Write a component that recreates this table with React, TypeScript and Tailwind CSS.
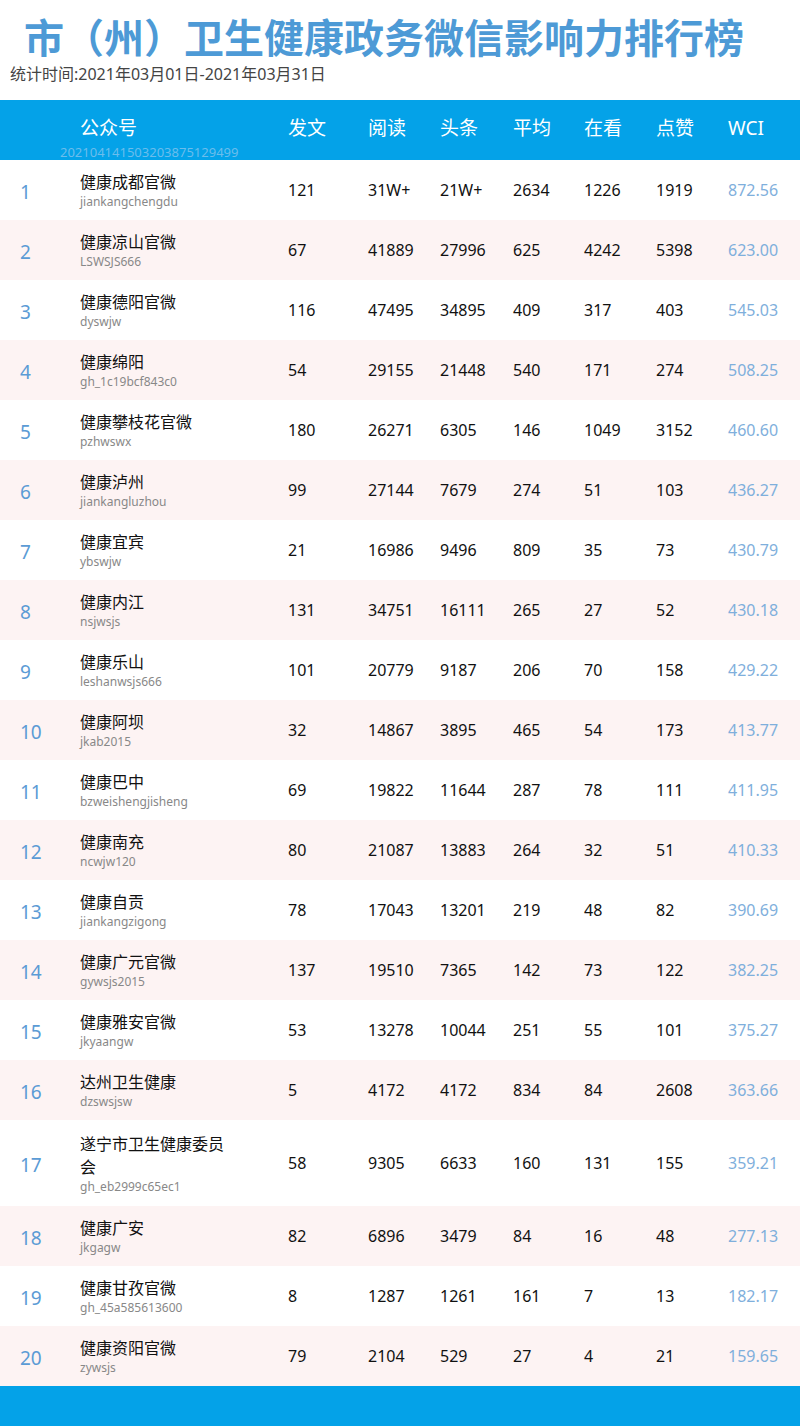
import React from 'react';

interface Row {
  name: string;
  id: string;
  posts: string;
  reads: string;
  top: string;
  avg: string;
  watch: string;
  likes: string;
  wci: string;
}

const rows: Row[] = [
  { name: '健康成都官微', id: 'jiankangchengdu', posts: '121', reads: '31W+', top: '21W+', avg: '2634', watch: '1226', likes: '1919', wci: '872.56' },
  { name: '健康凉山官微', id: 'LSWSJS666', posts: '67', reads: '41889', top: '27996', avg: '625', watch: '4242', likes: '5398', wci: '623.00' },
  { name: '健康德阳官微', id: 'dyswjw', posts: '116', reads: '47495', top: '34895', avg: '409', watch: '317', likes: '403', wci: '545.03' },
  { name: '健康绵阳', id: 'gh_1c19bcf843c0', posts: '54', reads: '29155', top: '21448', avg: '540', watch: '171', likes: '274', wci: '508.25' },
  { name: '健康攀枝花官微', id: 'pzhwswx', posts: '180', reads: '26271', top: '6305', avg: '146', watch: '1049', likes: '3152', wci: '460.60' },
  { name: '健康泸州', id: 'jiankangluzhou', posts: '99', reads: '27144', top: '7679', avg: '274', watch: '51', likes: '103', wci: '436.27' },
  { name: '健康宜宾', id: 'ybswjw', posts: '21', reads: '16986', top: '9496', avg: '809', watch: '35', likes: '73', wci: '430.79' },
  { name: '健康内江', id: 'nsjwsjs', posts: '131', reads: '34751', top: '16111', avg: '265', watch: '27', likes: '52', wci: '430.18' },
  { name: '健康乐山', id: 'leshanwsjs666', posts: '101', reads: '20779', top: '9187', avg: '206', watch: '70', likes: '158', wci: '429.22' },
  { name: '健康阿坝', id: 'jkab2015', posts: '32', reads: '14867', top: '3895', avg: '465', watch: '54', likes: '173', wci: '413.77' },
  { name: '健康巴中', id: 'bzweishengjisheng', posts: '69', reads: '19822', top: '11644', avg: '287', watch: '78', likes: '111', wci: '411.95' },
  { name: '健康南充', id: 'ncwjw120', posts: '80', reads: '21087', top: '13883', avg: '264', watch: '32', likes: '51', wci: '410.33' },
  { name: '健康自贡', id: 'jiankangzigong', posts: '78', reads: '17043', top: '13201', avg: '219', watch: '48', likes: '82', wci: '390.69' },
  { name: '健康广元官微', id: 'gywsjs2015', posts: '137', reads: '19510', top: '7365', avg: '142', watch: '73', likes: '122', wci: '382.25' },
  { name: '健康雅安官微', id: 'jkyaangw', posts: '53', reads: '13278', top: '10044', avg: '251', watch: '55', likes: '101', wci: '375.27' },
  { name: '达州卫生健康', id: 'dzswsjsw', posts: '5', reads: '4172', top: '4172', avg: '834', watch: '84', likes: '2608', wci: '363.66' },
  { name: '遂宁市卫生健康委员会', id: 'gh_eb2999c65ec1', posts: '58', reads: '9305', top: '6633', avg: '160', watch: '131', likes: '155', wci: '359.21' },
  { name: '健康广安', id: 'jkgagw', posts: '82', reads: '6896', top: '3479', avg: '84', watch: '16', likes: '48', wci: '277.13' },
  { name: '健康甘孜官微', id: 'gh_45a585613600', posts: '8', reads: '1287', top: '1261', avg: '161', watch: '7', likes: '13', wci: '182.17' },
  { name: '健康资阳官微', id: 'zywsjs', posts: '79', reads: '2104', top: '529', avg: '27', watch: '4', likes: '21', wci: '159.65' },
];

const cols = 'grid grid-cols-[80px_208px_80px_72px_73px_71px_72px_72px_72px]';

export default function App() {
  return (
    <div className="w-[800px] min-h-[1426px] bg-white font-['Noto_Sans','Noto_Sans_CJK_SC',sans-serif] flex flex-col">
      {/* Title */}
      <h1 className="pl-[24px] pt-[14px] h-[58px] text-[40px] leading-[44px] font-bold text-[#4d9ad6] font-['Noto_Sans_CJK_SC',sans-serif]">
        市（州）卫生健康政务微信影响力排行榜
      </h1>
      <p className="pl-[10px] h-[42px] text-[16px] leading-[32px] text-[#444]">
        统计时间:2021年03月01日-2021年03月31日
      </p>

      {/* Header */}
      <div className={`${cols} h-[60px] pb-[4px] bg-[#04a2e8] text-white text-[19px] items-center`}>
        <div />
        <div className="relative">
          公众号
          <span className="absolute left-[-20px] top-[30px] text-[13px] leading-[16px] text-[#6bbdec]">
            202104141503203875129499
          </span>
        </div>
        <div>发文</div>
        <div>阅读</div>
        <div>头条</div>
        <div>平均</div>
        <div>在看</div>
        <div>点赞</div>
        <div>WCI</div>
      </div>

      {/* Rows */}
      {rows.map((r, i) => (
        <div
          key={r.id}
          className={`${cols} min-h-[60px] items-center text-[16px] text-[#111] ${r.name.length > 9 ? 'py-[11.5px]' : 'py-[10px]'} ${i % 2 === 1 ? 'bg-[#fdf3f3]' : 'bg-white'}`}
        >
          <div className="pl-[20px] pt-[5px] text-[19px] text-[#5b9bd5]">{i + 1}</div>
          <div className="flex flex-col">
            <span className="max-w-[152px] leading-[23px] font-['Noto_Sans_CJK_SC',sans-serif]">{r.name}</span>
            <span className="text-[12px] leading-[17px] text-[#888]">{r.id}</span>
          </div>
          <div>{r.posts}</div>
          <div>{r.reads}</div>
          <div>{r.top}</div>
          <div>{r.avg}</div>
          <div>{r.watch}</div>
          <div>{r.likes}</div>
          <div className="text-[#7fafdc]">{r.wci}</div>
        </div>
      ))}

      {/* Footer bar */}
      <div className="h-[40px] bg-[#04a2e8]" />
    </div>
  );
}
